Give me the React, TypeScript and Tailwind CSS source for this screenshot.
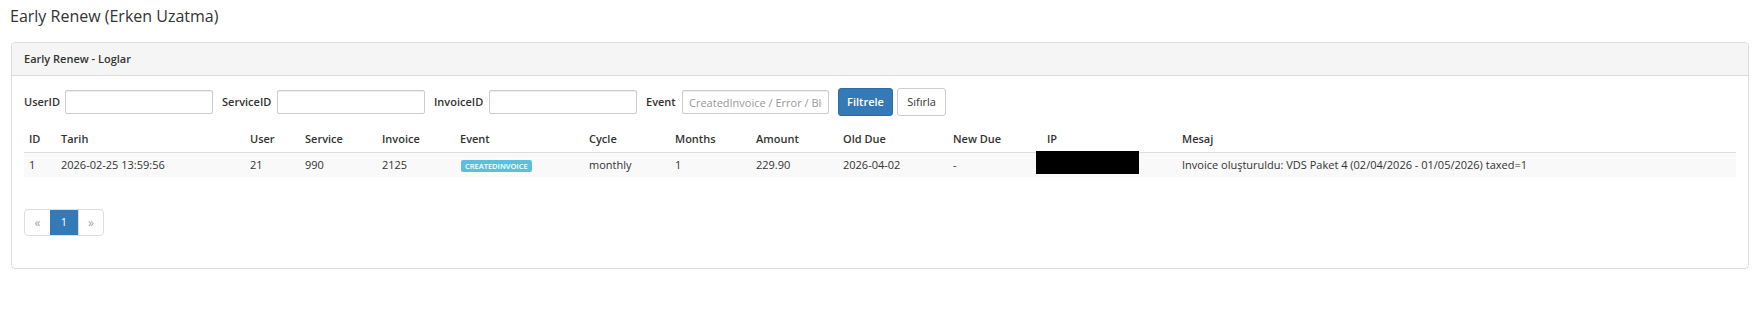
import React from "react";

// Early renew log page (WHMCS-ish admin panel)
const columns = [
  { key: "id", label: "ID", w: "w-[32px]" },
  { key: "date", label: "Tarih", w: "w-[189px]" },
  { key: "user", label: "User", w: "w-[55px]" },
  { key: "service", label: "Service", w: "w-[77px]" },
  { key: "invoice", label: "Invoice", w: "w-[78px]" },
  { key: "event", label: "Event", w: "w-[129px]" },
  { key: "cycle", label: "Cycle", w: "w-[86px]" },
  { key: "months", label: "Months", w: "w-[81px]" },
  { key: "amount", label: "Amount", w: "w-[87px]" },
  { key: "oldDue", label: "Old Due", w: "w-[110px]" },
  { key: "newDue", label: "New Due", w: "w-[94px]" },
  { key: "ip", label: "IP", w: "w-[135px]" },
  { key: "msg", label: "Mesaj", w: "w-auto" },
];

const logs = [
  {
    id: 1,
    date: "2026-02-25 13:59:56",
    user: 21,
    service: 990,
    invoice: 2125,
    event: "CreatedInvoice",
    cycle: "monthly",
    months: 1,
    amount: "229.90",
    oldDue: "2026-04-02",
    newDue: "-",
    msg: "Invoice oluşturuldu: VDS Paket 4 (02/04/2026 - 01/05/2026) taxed=1",
  },
];

const filters = [
  { label: "UserID", placeholder: "", lw: "w-[36px]", w: "w-[148px]" },
  { label: "ServiceID", placeholder: "", lw: "w-[50px]", w: "w-[148px]" },
  { label: "InvoiceID", placeholder: "", lw: "w-[50px]", w: "w-[148px]" },
  { label: "Event", placeholder: "CreatedInvoice / Error / Blocked", lw: "w-[31px]", w: "w-[147px]" },
];

export default function App() {
  return (
    <div className="min-h-[333px] bg-white text-[#333] font-['Open_Sans',sans-serif] text-[11px]">
      <h1 className="pl-[10px] pt-[5px] text-[16px] leading-[22px] font-normal text-[#333]">
        Early Renew (Erken Uzatma)
      </h1>

      <div className="ml-[11px] mr-[9px] mt-[15px] rounded-[4px] border border-[#ddd] bg-white">
        <div className="flex h-[33px] items-center rounded-t-[4px] border-b border-[#ddd] bg-[#f5f5f5] px-[12px]">
          <h3 className="text-[11px] font-semibold text-[#333]">Early Renew - Loglar</h3>
        </div>

        <div className="px-[12px] pt-[12px] pb-[32px]">
          {/* Filters */}
          <div className="flex h-[28px] items-center">
            {filters.map((f) => (
              <div key={f.label} className="mr-[9px] flex items-center">
                <label className={`${f.lw} mr-[5px] whitespace-nowrap font-semibold`}>{f.label}</label>
                <input
                  className={`${f.w} h-[24px] rounded-[2px] border border-[#ccc] px-[6px] text-[11px] text-[#555] shadow-[inset_0_1px_1px_rgba(0,0,0,0.075)] outline-none placeholder:text-[#999]`}
                  placeholder={f.placeholder}
                />
              </div>
            ))}
            <button className="h-[28px] w-[55px] rounded-[3px] border border-[#2e6da4] bg-[#337ab7] text-[11px] font-semibold text-white">
              Filtrele
            </button>
            <button className="ml-[4px] h-[28px] w-[49px] rounded-[3px] border border-[#ccc] bg-white text-[11px] text-[#333]">
              Sıfırla
            </button>
          </div>

          {/* Table */}
          <table className="mt-[11px] w-full table-fixed border-collapse">
            <colgroup>
              {columns.map((c) => (
                <col key={c.key} className={c.w} />
              ))}
            </colgroup>
            <thead>
              <tr className="h-[25px] border-b border-[#ddd]">
                {columns.map((c) => (
                  <th key={c.key} className="px-[5px] text-left align-middle font-semibold">
                    {c.label}
                  </th>
                ))}
              </tr>
            </thead>
            <tbody>
              {logs.map((r) => (
                <tr key={r.id} className="h-[25px] bg-[#f9f9f9]">
                  <td className="px-[5px]">{r.id}</td>
                  <td className="px-[5px]">{r.date}</td>
                  <td className="px-[5px]">{r.user}</td>
                  <td className="px-[5px]">{r.service}</td>
                  <td className="px-[5px]">{r.invoice}</td>
                  <td className="px-[5px]">
                    <span className="ml-px inline-block rounded-[2px] bg-[#5bc0de] px-[4px] text-[7.5px] leading-[12px] font-semibold uppercase text-white">
                      {r.event}
                    </span>
                  </td>
                  <td className="px-[5px]">{r.cycle}</td>
                  <td className="px-[5px]">{r.months}</td>
                  <td className="px-[5px]">{r.amount}</td>
                  <td className="px-[5px]">{r.oldDue}</td>
                  <td className="px-[5px]">{r.newDue}</td>
                  <td className="relative px-[5px]">
                    {/* redacted ip */}
                    <span className="absolute top-[-2px] left-[-6px] h-[23px] w-[103px] bg-black" />
                  </td>
                  <td className="px-[5px] whitespace-nowrap">{r.msg}</td>
                </tr>
              ))}
            </tbody>
          </table>

          {/* Pagination */}
          <div className="mt-[32px] flex h-[27px] w-fit overflow-hidden rounded-[4px] border border-[#ddd] text-[11px]">
            <span className="flex w-[25px] items-center justify-center text-[12px] text-[#9aa7b6]">«</span>
            <span className="flex w-[28px] items-center justify-center bg-[#337ab7] text-white">1</span>
            <span className="flex w-[25px] items-center justify-center border-l border-[#ddd] text-[12px] text-[#9aa7b6]">»</span>
          </div>
        </div>
      </div>
    </div>
  );
}
